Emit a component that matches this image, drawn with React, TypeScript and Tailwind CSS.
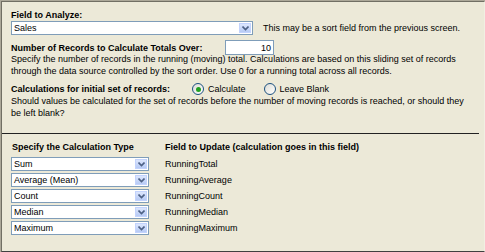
import React from 'react';

const font = { fontFamily: '"Liberation Sans", Arial, sans-serif' };

function ArrowButton() {
  return (
    <div className="flex h-full w-[12px] shrink-0 items-center justify-center border border-[#c3d3fd] bg-gradient-to-b from-[#dce6fd] to-[#b7caf5]">
      <svg width="7" height="5" viewBox="0 0 7 5">
        <path d="M0.5 0.5 L3.5 3.5 L6.5 0.5" fill="none" stroke="#4d6185" strokeWidth="1.6" />
      </svg>
    </div>
  );
}

function Select({ value, width }: { value: string; width: string }) {
  return (
    <div className={`flex h-[14px] ${width} items-stretch border border-[#7f9db9] bg-white p-px`}>
      <span className="flex grow items-center pl-[1px] text-[9px] leading-none text-black">
        {value}
      </span>
      <ArrowButton />
    </div>
  );
}

function Radio({ checked, label }: { checked: boolean; label: string }) {
  return (
    <div className="flex items-center gap-[4px]">
      <div className="flex h-[12px] w-[12px] items-center justify-center rounded-full border border-[#1c5180] bg-gradient-to-br from-[#dcdcd6] to-white">
        {checked && <div className="h-[5px] w-[5px] rounded-full bg-[#21a121]" />}
      </div>
      <span>{label}</span>
    </div>
  );
}

const rows = [
  { type: 'Sum', field: 'RunningTotal' },
  { type: 'Average (Mean)', field: 'RunningAverage' },
  { type: 'Count', field: 'RunningCount' },
  { type: 'Median', field: 'RunningMedian' },
  { type: 'Maximum', field: 'RunningMaximum' },
];

export default function App() {
  return (
    <div
      className="h-[252px] w-[485px] border-t border-l border-[#aca899] border-r-white border-b-white bg-[#ECE9D8] text-[9px] leading-[12px] text-black"
      style={font}
    >
      <div className="flex h-full flex-col border-t border-l border-[#716f64] border-r border-b border-r-[#f1efe2] border-b-[#404040]">
        <div className="flex flex-col pt-[7px] pl-[9px] pr-[8px]">
          <div className="font-bold">Field to Analyze:</div>
          <div className="flex items-center">
            <Select value="Sales" width="w-[242px]" />
            <span className="ml-[10px]">This may be a sort field from the previous screen.</span>
          </div>

          <div className="mt-[5px] flex h-[15px] items-center">
            <span className="w-[214px] font-bold">Number of Records to Calculate Totals Over:</span>
            <div className="flex h-[15px] w-[49px] items-center justify-end border border-[#7f9db9] bg-white pr-[2px]">
              10
            </div>
          </div>
          <p className="-mt-[2px]">
            Specify the number of records in the running (moving) total. Calculations are based on this sliding set of records
            <br />
            through the data source controlled by the sort order. Use 0 for a running total across all records.
          </p>

          <div className="mt-[6px] flex items-center">
            <span className="w-[181px] font-bold">Calculations for initial set of records:</span>
            <Radio checked label="Calculate" />
            <div className="ml-[18px]">
              <Radio checked={false} label="Leave Blank" />
            </div>
          </div>
          <p>
            Should values be calculated for the set of records before the number of moving records is reached, or should they
            <br />
            be left blank?
          </p>
        </div>

        <div className="mt-[14px] mr-[5px] h-px bg-[#222]" />

        <div className="flex flex-col pt-[7px] pl-[9px]">
          <div className="flex font-bold">
            <span className="w-[154px] pl-[1px]">Specify the Calculation Type</span>
            <span>Field to Update (calculation goes in this field)</span>
          </div>
          <div className="mt-[4px] flex flex-col gap-[2px]">
            {rows.map((r) => (
              <div key={r.type} className="flex items-center">
                <Select value={r.type} width="w-[138px]" />
                <span className="ml-[16px]">{r.field}</span>
              </div>
            ))}
          </div>
        </div>
      </div>
    </div>
  );
}
